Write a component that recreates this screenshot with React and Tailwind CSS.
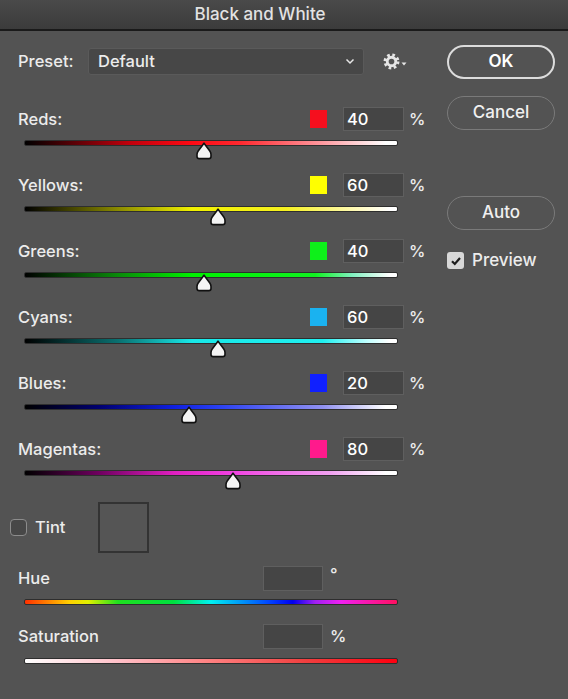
import React from 'react';

const channels = [
  { name: 'Reds:', value: 40, swatch: 'bg-[#f50f1e]', track: 'bg-[linear-gradient(to_right,#000_0%,#c0000c_28%,#ff0a14_45%,#ff2a30_58%,#ff9aa0_80%,#fff_97%)]' },
  { name: 'Yellows:', value: 60, swatch: 'bg-[#ffff00]', track: 'bg-[linear-gradient(to_right,#000_0%,#8a8a00_25%,#f0f000_45%,#f5f020_70%,#fffac0_90%,#fff_98%)]' },
  { name: 'Greens:', value: 40, swatch: 'bg-[#0ef01a]', track: 'bg-[linear-gradient(to_right,#000_0%,#0a8a0a_25%,#00f000_45%,#10f020_78%,#80f0c0_88%,#fff_98%)]' },
  { name: 'Cyans:', value: 60, swatch: 'bg-[#1ab2f0]', track: 'bg-[linear-gradient(to_right,#000_0%,#0a7070_25%,#18e8e8_45%,#20f0f0_80%,#c0ffff_92%,#fff_98%)]' },
  { name: 'Blues:', value: 20, swatch: 'bg-[#1020ff]', track: 'bg-[linear-gradient(to_right,#000_0%,#000070_20%,#1020e0_40%,#2a40f0_52%,#9090f0_80%,#fff_97%)]' },
  { name: 'Magentas:', value: 80, swatch: 'bg-[#ff1a8c]', track: 'bg-[linear-gradient(to_right,#000_0%,#700060_20%,#e020c0_40%,#f040e0_55%,#f0a0f0_82%,#fff_97%)]' },
];

function Thumb({ value }) {
  const pos = ((value + 200) / 500) * 100;
  return (
    <svg
      className="absolute top-[1px] -translate-x-1/2"
      style={{ left: `${pos}%` }}
      width="16"
      height="18"
      viewBox="0 0 16 18"
    >
      <path
        d="M8 1.2 L13.8 9 Q15 10.6 15 12.4 L15 14.5 Q15 16.6 12.8 16.6 L3.2 16.6 Q1 16.6 1 14.5 L1 12.4 Q1 10.6 2.2 9 Z"
        fill="#f4f4f4"
        stroke="#111"
        strokeWidth="1.6"
        strokeLinejoin="round"
      />
    </svg>
  );
}

function Track({ gradient, value }) {
  return (
    <div className={`relative ml-[6px] w-[374px] h-[6px] rounded-[2px] border border-[#2e2e2e] ${gradient}`}>
      {value !== undefined && <Thumb value={value} />}
    </div>
  );
}

function NumBox({ value, className = '' }) {
  return (
    <div className={`h-[24px] bg-[#454545] border border-[#5f5f5f] pl-[3px] flex items-center text-white ${className}`}>
      {value}
    </div>
  );
}

function Gear() {
  return (
    <div className="flex items-end gap-[1px] ml-[19px]">
      <svg width="17" height="17" viewBox="0 0 24 24">
        <circle cx="12" cy="12" r="9" fill="none" stroke="#e6e6e6" strokeWidth="4.5" strokeDasharray="3.6 3.47" />
        <circle cx="12" cy="12" r="6" fill="none" stroke="#e6e6e6" strokeWidth="4" />
      </svg>
      <svg width="6" height="6" viewBox="0 0 6 6" className="mb-[3px]">
        <path d="M0.5 1.5 L5.5 1.5 L3 4.5 Z" fill="#e6e6e6" />
      </svg>
    </div>
  );
}

export default function App() {
  return (
    <div
      className="w-[568px] h-[699px] bg-[#535353] text-[#ececec] text-[16.5px] font-medium overflow-hidden"
      style={{ fontFamily: 'Inter, "Noto Sans", sans-serif' }}
    >
      <div className="h-[31px] bg-[linear-gradient(to_bottom,#4a4a4a,#3b3b3b)] border-b-2 border-[#1a1a1a] flex items-center justify-center pr-[48px] text-[17px] text-[#e2e2e2]">
        Black and White
      </div>

      <div className="flex">
        <div className="w-[447px] pl-[18px] pt-[17px] flex flex-col">
          <div className="h-[27px] flex items-center">
            <span className="w-[70px]">Preset:</span>
            <div className="w-[276px] h-[27px] bg-[#474747] border border-[#5a5a5a] rounded-[3px] flex items-center justify-between pl-[9px] pr-[8px]">
              <span>Default</span>
              <svg width="10" height="7" viewBox="0 0 10 7">
                <path d="M1.5 1.5 L5 5 L8.5 1.5" fill="none" stroke="#e6e6e6" strokeWidth="1.5" />
              </svg>
            </div>
            <Gear />
          </div>

          <div className="mt-[32px] flex flex-col">
            {channels.map((c) => (
              <div key={c.name} className="h-[66px] flex flex-col">
                <div className="w-[406px] h-[24px] flex items-center">
                  <span className="flex-1">{c.name}</span>
                  <div className={`w-[17px] h-[18px] ${c.swatch}`} />
                  <NumBox value={c.value} className="ml-[16px] w-[61px]" />
                  <span className="ml-[5px] w-[15px]">%</span>
                </div>
                <div className="mt-[9px]">
                  <Track gradient={c.track} value={c.value} />
                </div>
              </div>
            ))}
          </div>

          <div className="h-[51px] flex items-center -ml-[8px] -mt-[1px]">
            <div className="w-[17px] h-[17px] rounded-[4px] border-[1.5px] border-[#8c8c8c] bg-[#474747]" />
            <span className="ml-[8px] w-[63px]">Tint</span>
            <div className="w-[51px] h-[51px] border-2 border-[#333333] bg-[#555555]" />
          </div>

          <div className="mt-[13px] w-[325px] h-[25px] flex items-center">
            <span className="flex-1">Hue</span>
            <NumBox value="" className="w-[60px] h-[25px]" />
            <span className="ml-[7px] w-[13px] self-start -mt-[4px]">°</span>
          </div>
          <div className="mt-[8px]">
            <Track gradient="bg-[linear-gradient(to_right,#ff3000_0%,#ffd000_12%,#e0f000_17%,#20e020_25%,#00e040_40%,#00f0f0_50%,#0040ff_66%,#0000f0_72%,#a020f0_78%,#f020f0_85%,#ff1060_100%)]" />
          </div>

          <div className="mt-[19px] w-[325px] h-[25px] flex items-center">
            <span className="flex-1">Saturation</span>
            <NumBox value="" className="w-[60px] h-[25px]" />
            <span className="ml-[7px] w-[13px]">%</span>
          </div>
          <div className="mt-[9px]">
            <Track gradient="bg-[linear-gradient(to_right,#fff_0%,#ffc0c8_25%,#ff8080_50%,#f04040_75%,#ff0010_100%)]" />
          </div>
        </div>

        <div className="w-[108px] pt-[14px] flex flex-col">
          <button className="h-[34px] rounded-full border-2 border-[#dcdcdc] text-white text-[17px] font-semibold">OK</button>
          <button className="mt-[17px] h-[34px] rounded-full border-[1.5px] border-[#7a7a7a] text-[#f0f0f0] text-[17px]">Cancel</button>
          <button className="mt-[66px] h-[34px] rounded-full border-[1.5px] border-[#7a7a7a] text-[#f0f0f0] text-[17px]">Auto</button>
          <div className="mt-[18px] flex items-center">
            <div className="w-[17px] h-[17px] rounded-[3px] bg-[#d8d8d8] flex items-center justify-center">
              <svg width="12" height="12" viewBox="0 0 12 12">
                <path d="M2 6.2 L4.8 9 L10 3" fill="none" stroke="#1e1e1e" strokeWidth="2.2" />
              </svg>
            </div>
            <span className="ml-[8px] text-[17px]">Preview</span>
          </div>
        </div>
      </div>
    </div>
  );
}
